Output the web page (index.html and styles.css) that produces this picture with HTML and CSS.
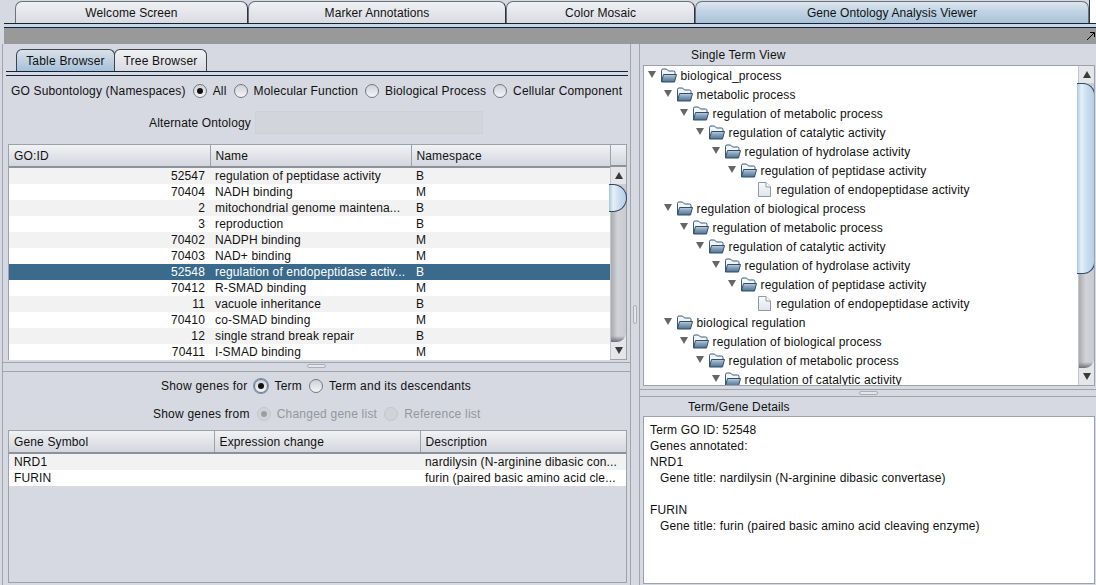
FILE: index.html
```html
<!DOCTYPE html>
<html lang="en">
<head>
    <meta charset="UTF-8">
    <title>Gene Ontology Analysis Viewer</title>
    <link rel="stylesheet" href="styles.css">
</head>
<body>
    <svg class="defs" width="0" height="0">
        <defs>
            <linearGradient id="folder-front" x1="0" y1="0" x2="0" y2="1">
                <stop offset="0" stop-color="#c3d2e0"/>
                <stop offset=".35" stop-color="#8ea7bf"/>
                <stop offset="1" stop-color="#4f7192"/>
            </linearGradient>
            <linearGradient id="leaf-fill" x1="0" y1="0" x2="0" y2="1">
                <stop offset="0" stop-color="#fafbfc"/>
                <stop offset="1" stop-color="#dde4ec"/>
            </linearGradient>
        </defs>
        <symbol id="folder" viewBox="0 0 17 15">
            <path d="M1.500 13.500V2.500q0-1.500 1.500-1.500h3.500l2 2h5q1.500 0 1.500 1.500V6" fill="#f3f6f9" stroke="#3a5a7a"/>
            <path d="M1.500 14 3.500 6.500h13L14.500 14z" fill="url(#folder-front)" stroke="#2f4d6b"/>
        </symbol>
        <symbol id="leaf" viewBox="0 0 17 15">
            <path d="M2.500 .5H10L14.500 5v9.500h-12z" fill="url(#leaf-fill)" stroke="#8f99a5"/>
            <path d="M10 .5V5h4.500" fill="#fff" stroke="#8f99a5"/>
        </symbol>
        <symbol id="up" viewBox="0 0 8 7"><path d="M4 0 8 7H0z" fill="#3a3a3a"/></symbol>
        <symbol id="down" viewBox="0 0 8 7"><path d="M4 7 8 0H0z" fill="#3a3a3a"/></symbol>
        <symbol id="open" viewBox="0 0 8 7"><path d="M4 7 8 0H0z" fill="#666"/></symbol>
    </svg>

    <div class="app">
        <!-- Top tabs -->
        <div class="main-tabs">
            <div class="main-tab tab-welcome">Welcome Screen</div>
            <div class="main-tab tab-marker">Marker Annotations</div>
            <div class="main-tab tab-mosaic">Color Mosaic</div>
            <div class="main-tab tab-viewer active">Gene Ontology Analysis Viewer</div>
            <div class="main-tabs-end"></div>
        </div>
        <div class="tab-strip"></div>
        <div class="title-bar">
            <svg class="maximize" width="8" height="8" viewBox="0 0 8 8"><path d="M0 8 7 1M3 .5h4.500V5" fill="none" stroke="#000"/></svg>
        </div>

        <div class="split">
            <!-- Left side -->
            <div class="left">
                <div class="sub-tabs">
                    <div class="sub-tab active">Table Browser</div>
                    <div class="sub-tab second">Tree Browser</div>
                </div>
                <div class="sub-strip"></div>

                <div class="radio-row ns-row">
                    <span>GO Subontology (Namespaces)</span>
                    <span class="radio on"></span><span>All</span>
                    <span class="radio"></span><span>Molecular Function</span>
                    <span class="radio"></span><span>Biological Process</span>
                    <span class="radio"></span><span>Cellular Component</span>
                </div>

                <div class="alt-row">
                    <span>Alternate Ontology</span>
                    <div class="alt-field"></div>
                </div>

                <div class="grid-box terms">
                    <div class="grid-scroll">
                        <table class="grid">
                            <thead>
                                <tr><th class="c-id">GO:ID</th><th class="c-name">Name</th><th>Namespace</th></tr>
                            </thead>
                            <tbody>
                                <tr><td class="num">52547</td><td>regulation of peptidase activity</td><td>B</td></tr>
                                <tr><td class="num">70404</td><td>NADH binding</td><td>M</td></tr>
                                <tr><td class="num">2</td><td>mitochondrial genome maintena...</td><td>B</td></tr>
                                <tr><td class="num">3</td><td>reproduction</td><td>B</td></tr>
                                <tr><td class="num">70402</td><td>NADPH binding</td><td>M</td></tr>
                                <tr><td class="num">70403</td><td>NAD+ binding</td><td>M</td></tr>
                                <tr class="selected"><td class="num">52548</td><td>regulation of endopeptidase activ...</td><td>B</td></tr>
                                <tr><td class="num">70412</td><td>R-SMAD binding</td><td>M</td></tr>
                                <tr><td class="num">11</td><td>vacuole inheritance</td><td>B</td></tr>
                                <tr><td class="num">70410</td><td>co-SMAD binding</td><td>M</td></tr>
                                <tr><td class="num">12</td><td>single strand break repair</td><td>B</td></tr>
                                <tr><td class="num">70411</td><td>I-SMAD binding</td><td>M</td></tr>
                            </tbody>
                        </table>
                    </div>
                    <div class="scrollbar table-bar">
                        <div class="bar-corner"></div>
                        <div class="bar-btn"><svg width="8" height="7"><use href="#up"/></svg></div>
                        <div class="bar-track"><div class="thumb"></div></div>
                        <div class="bar-btn"><svg width="8" height="7"><use href="#down"/></svg></div>
                    </div>
                </div>

                <div class="h-splitter"><span class="grip"></span></div>

                <div class="radio-row genes-for">
                    <span>Show genes for</span>
                    <span class="radio on focus"></span><span>Term</span>
                    <span class="radio"></span><span>Term and its descendants</span>
                </div>
                <div class="radio-row genes-from">
                    <span>Show genes from</span>
                    <span class="radio on off"></span><span class="muted">Changed gene list</span>
                    <span class="radio off"></span><span class="muted">Reference list</span>
                </div>

                <div class="grid-box genes">
                    <table class="grid">
                        <thead>
                            <tr><th class="c-sym">Gene Symbol</th><th class="c-exp">Expression change</th><th>Description</th></tr>
                        </thead>
                        <tbody>
                            <tr><td>NRD1</td><td></td><td>nardilysin (N-arginine dibasic con...</td></tr>
                            <tr><td>FURIN</td><td></td><td>furin (paired basic amino acid cle...</td></tr>
                        </tbody>
                    </table>
                </div>
            </div>

            <div class="v-splitter"><span class="grip"></span></div>

            <!-- Right side -->
            <div class="right">
                <div class="pane-title single">Single Term View</div>
                <div class="tree-box">
                    <div class="tree">
                        <div class="node d0"><svg class="arrow"><use href="#open"/></svg><svg class="ico"><use href="#folder"/></svg>biological_process</div>
                        <div class="node d1"><svg class="arrow"><use href="#open"/></svg><svg class="ico"><use href="#folder"/></svg>metabolic process</div>
                        <div class="node d2"><svg class="arrow"><use href="#open"/></svg><svg class="ico"><use href="#folder"/></svg>regulation of metabolic process</div>
                        <div class="node d3"><svg class="arrow"><use href="#open"/></svg><svg class="ico"><use href="#folder"/></svg>regulation of catalytic activity</div>
                        <div class="node d4"><svg class="arrow"><use href="#open"/></svg><svg class="ico"><use href="#folder"/></svg>regulation of hydrolase activity</div>
                        <div class="node d5"><svg class="arrow"><use href="#open"/></svg><svg class="ico"><use href="#folder"/></svg>regulation of peptidase activity</div>
                        <div class="node d6"><span class="no-arrow"></span><svg class="ico"><use href="#leaf"/></svg>regulation of endopeptidase activity</div>
                        <div class="node d1"><svg class="arrow"><use href="#open"/></svg><svg class="ico"><use href="#folder"/></svg>regulation of biological process</div>
                        <div class="node d2"><svg class="arrow"><use href="#open"/></svg><svg class="ico"><use href="#folder"/></svg>regulation of metabolic process</div>
                        <div class="node d3"><svg class="arrow"><use href="#open"/></svg><svg class="ico"><use href="#folder"/></svg>regulation of catalytic activity</div>
                        <div class="node d4"><svg class="arrow"><use href="#open"/></svg><svg class="ico"><use href="#folder"/></svg>regulation of hydrolase activity</div>
                        <div class="node d5"><svg class="arrow"><use href="#open"/></svg><svg class="ico"><use href="#folder"/></svg>regulation of peptidase activity</div>
                        <div class="node d6"><span class="no-arrow"></span><svg class="ico"><use href="#leaf"/></svg>regulation of endopeptidase activity</div>
                        <div class="node d1"><svg class="arrow"><use href="#open"/></svg><svg class="ico"><use href="#folder"/></svg>biological regulation</div>
                        <div class="node d2"><svg class="arrow"><use href="#open"/></svg><svg class="ico"><use href="#folder"/></svg>regulation of biological process</div>
                        <div class="node d3"><svg class="arrow"><use href="#open"/></svg><svg class="ico"><use href="#folder"/></svg>regulation of metabolic process</div>
                        <div class="node d4"><svg class="arrow"><use href="#open"/></svg><svg class="ico"><use href="#folder"/></svg>regulation of catalytic activity</div>
                    </div>
                    <div class="scrollbar tree-bar">
                        <div class="bar-btn"><svg width="8" height="7"><use href="#up"/></svg></div>
                        <div class="bar-track"><div class="thumb"></div></div>
                        <div class="bar-btn"><svg width="8" height="7"><use href="#down"/></svg></div>
                    </div>
                </div>
                <div class="h-splitter"><span class="grip"></span></div>
                <div class="pane-title details">Term/Gene Details</div>
                <div class="details-box">
                    <div>Term GO ID: 52548</div>
                    <div>Genes annotated:</div>
                    <div>NRD1</div>
                    <div class="indent">Gene title: nardilysin (N-arginine dibasic convertase)</div>
                    <div class="blank"></div>
                    <div>FURIN</div>
                    <div class="indent">Gene title: furin (paired basic amino acid cleaving enzyme)</div>
                </div>
            </div>
        </div>
    </div>
</body>
</html>
```

FILE: styles.css
```css
* {
    box-sizing: border-box;
}
html, body {
    margin: 0;
    height: 100%;
    overflow: hidden;
}
body {
    font-family: "Liberation Sans", Arial, sans-serif;
    font-size: 12px;
    letter-spacing: .14px;
    color: #111;
    background-color: #d6d9e1;
}
.defs {
    position: absolute;
}
.app {
    width: 1096px;
    height: 585px;
    display: flex;
    flex-direction: column;
}

/* top tabs */
.main-tabs {
    display: flex;
    height: 24px;
    flex: none;
    margin-left: 4px;
    padding: 1px 0 0 11px;
    border-bottom: 1px solid #11233a;
    letter-spacing: .08px;
}
.main-tab {
    border: 1px solid #6d7178;
    border-bottom: none;
    border-right-color: #2b3442;
    border-radius: 7px 7px 0 0;
    background: linear-gradient(#f0f1f3, #d9dbe2);
    text-align: center;
    line-height: 23px;
}
.tab-welcome { width: 233px; }
.tab-marker { width: 258px; }
.tab-mosaic { width: 189px; }
.tab-viewer { width: 394px; }
.main-tab.active {
    background: linear-gradient(#dde7f0, #c3d5e5 40%, #a9c3d9);
    border-right-color: #6d7178;
}
.main-tabs-end {
    flex: 1;
    background-color: #fff;
    margin-top: -1px;
    border-left: 1px solid #2b3442;
}
.tab-strip {
    height: 4px;
    flex: none;
    margin-left: 4px;
    background-color: #cbd6e2;
    border-bottom: 1px solid #11233a;
}
.title-bar {
    height: 16px;
    flex: none;
    margin-left: 4px;
    padding: 4px 1px 0 0;
    background-color: #999;
    display: flex;
    justify-content: flex-end;
    align-items: flex-start;
}

/* main split */
.split {
    flex: 1;
    display: flex;
    min-height: 0;
    margin-left: 2px;
    border-left: 1px solid #a0a4ac;
}
.left {
    width: 628px;
    flex: none;
    display: flex;
    flex-direction: column;
    padding: 0 5px 2px 5px;
    border-right: 1px solid #a0a4ac;
}
.v-splitter {
    width: 9px;
    flex: none;
    border-right: 1px solid #a0a4ac;
    display: flex;
    align-items: center;
    justify-content: flex-start;
    padding-left: 2px;
}
.v-splitter .grip {
    width: 4px;
    height: 19px;
    border: 1px solid #a9adb5;
    border-radius: 2px;
    background-color: #e4e6eb;
}
.right {
    flex: 1;
    min-width: 0;
    display: flex;
    flex-direction: column;
    padding: 0 1px 1px 3px;
}

/* sub tabs */
.sub-tabs {
    display: flex;
    height: 22px;
    margin-top: 5px;
    margin-left: 8px;
    flex: none;
    letter-spacing: .2px;
}
.sub-tab {
    border: 1px solid #3b4450;
    border-bottom: none;
    border-radius: 6px 6px 0 0;
    background: linear-gradient(#f0f1f3, #d9dbe2);
    text-align: center;
    line-height: 22px;
}
.sub-tab.active {
    width: 99px;
    background: linear-gradient(#d9e1ea, #a6c1d8);
}
.sub-tab.second {
    width: 93px;
    margin-left: -1px;
}
.sub-strip {
    height: 5px;
    flex: none;
    border-top: 1px solid #11233a;
    border-bottom: 1px solid #11233a;
    margin-left: -2px;
    margin-right: -3px;
}

/* radio rows */
.radio-row {
    display: flex;
    align-items: center;
    flex: none;
    white-space: nowrap;
    letter-spacing: .22px;
}
.radio {
    width: 14px;
    height: 14px;
    flex: none;
    border: 1px solid #73777f;
    border-radius: 50%;
    background: linear-gradient(#cfd2d9, #f4f5f7);
    margin-left: 7px;
    margin-right: 6px;
    position: relative;
}
.radio.on::after {
    content: "";
    position: absolute;
    left: 3px;
    top: 3px;
    width: 6px;
    height: 6px;
    border-radius: 50%;
    background-color: #111;
}
.radio.focus {
    box-shadow: 0 0 0 1px #6f94b8;
}
.radio.off {
    border-color: #c3c6cd;
    background: #d0d3da;
}
.radio.off::after {
    background-color: #9a9da3;
}
.muted {
    color: #94979e;
}
.ns-row {
    height: 24px;
    margin-top: 3px;
    padding-left: 3px;
    letter-spacing: .17px;
}
.alt-row {
    display: flex;
    align-items: center;
    justify-content: flex-start;
    height: 23px;
    margin-top: 8px;
    padding-left: 141px;
    flex: none;
}
.alt-field {
    width: 228px;
    height: 23px;
    margin-left: 4px;
    background-color: #d2d6dc;
    border: 1px solid #cdd1d8;
}
.genes-for {
    height: 20px;
    margin-top: 4px;
    padding-left: 153px;
}
.genes-from {
    height: 20px;
    margin-top: 8px;
    padding-left: 145px;
}

/* tables */
.grid-box {
    display: flex;
    flex: none;
    width: 619px;
    border: 1px solid #9da1a9;
}
.terms {
    height: 216px;
    margin-top: 10px;
}
.genes {
    flex: 1;
    margin-top: 6px;
    display: block;
}
.grid-scroll {
    flex: 1;
    min-width: 0;
}
.grid {
    width: 100%;
    border-collapse: collapse;
    table-layout: fixed;
}
.grid th {
    height: 22px;
    padding: 0 5px;
    text-align: left;
    font-weight: normal;
    background: linear-gradient(#f1f2f4, #d3d6dd);
    border-right: 1px solid #9da1a9;
    border-bottom: 2px solid #8d919a;
}
.grid th:last-child {
    border-right: none;
}
.grid td {
    height: 16px;
    padding: 0 5px;
    line-height: 16px;
    white-space: nowrap;
    overflow: hidden;
    background-color: #fff;
}
.grid tbody tr:nth-child(odd) td {
    background-color: #f2f2f2;
}
.grid tbody tr.selected td {
    background-color: #3a6a8c;
    color: #fff;
}
.grid td.num {
    text-align: right;
}
.c-id { width: 201px; }
.c-name { width: 201px; }
.c-sym { width: 205px; }
.c-exp { width: 206px; }

/* scrollbars */
.scrollbar {
    width: 16px;
    flex: none;
    display: flex;
    flex-direction: column;
    border-left: 1px solid #c3c6cd;
    background-color: #e4e6ea;
}
.bar-corner {
    height: 22px;
    flex: none;
    margin-left: -1px;
    background: linear-gradient(#f1f2f4, #d3d6dd);
    border-left: 1px solid #9da1a9;
    border-bottom: 2px solid #8d919a;
}
.bar-btn {
    height: 17px;
    flex: none;
    display: flex;
    align-items: center;
    justify-content: center;
    background-color: #e4e6ea;
}
.bar-track {
    flex: 1;
    position: relative;
    border-radius: 0 0 9px 0;
    background:
        linear-gradient(transparent calc(100% - 6px), #6f7075),
        linear-gradient(90deg, #a9abaf, #d2d3d8 45%, #c8cad0);
}
.thumb {
    position: absolute;
    left: -2px;
    right: -1px;
    border: 1px solid #2f4a63;
    border-left: none;
    background: linear-gradient(90deg, #a9c6dd, #e6f0f7 25%, #c9deee 60%, #b5d0e6);
}
.table-bar .thumb {
    top: 0;
    height: 28px;
    border-radius: 0 14px 14px 0;
}
.tree-bar .thumb {
    top: 0;
    height: 191px;
    border-radius: 0 12px 12px 0;
}

/* right panes */
.pane-title {
    flex: none;
    height: 21px;
    line-height: 22px;
}
.single {
    padding-left: 48px;
}
.details {
    height: 19px;
    padding-left: 45px;
    line-height: 20px;
}
.tree-box {
    height: 321px;
    flex: none;
    display: flex;
    border: 1px solid #9da1a9;
    background-color: #fff;
    overflow: hidden;
}
.tree {
    flex: 1;
    min-width: 0;
    overflow: hidden;
}
.node {
    height: 19px;
    display: flex;
    align-items: center;
    white-space: nowrap;
    padding-left: 4px;
}
.arrow {
    width: 8px;
    height: 7px;
    flex: none;
    margin-right: 4px;
    margin-top: -3px;
}
.no-arrow {
    width: 12px;
    flex: none;
}
.ico {
    width: 17px;
    height: 15px;
    flex: none;
    margin-right: 3.5px;
}
.d1 { padding-left: 20px; }
.d2 { padding-left: 36px; }
.d3 { padding-left: 52px; }
.d4 { padding-left: 68px; }
.d5 { padding-left: 84px; }
.d6 { padding-left: 100px; }

.h-splitter {
    height: 10px;
    flex: none;
    margin-top: 2px;
    border-top: 1px solid #a0a4ac;
    border-bottom: 1px solid #a0a4ac;
    display: flex;
    justify-content: center;
}
.left .h-splitter {
    margin-left: -5px;
    margin-right: -5px;
}
.right .h-splitter {
    margin-top: 3px;
    margin-left: -3px;
    margin-right: -1px;
    height: 8px;
}
.h-splitter .grip {
    width: 19px;
    height: 4px;
    margin-top: 1px;
    border: 1px solid #a9adb5;
    border-radius: 2px;
    background-color: #e4e6eb;
}
.details-box {
    flex: 1;
    padding: 5px 6px;
    background-color: #fff;
    border: 1px solid #9da1a9;
    line-height: 16px;
}
.indent {
    padding-left: 10px;
}
.blank {
    height: 16px;
}
```
